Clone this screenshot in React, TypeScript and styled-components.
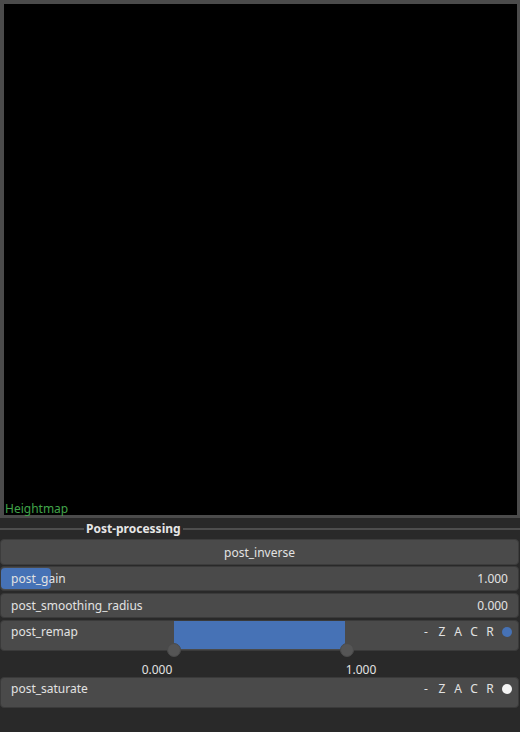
import styled, { createGlobalStyle } from "styled-components";

const GlobalStyle = createGlobalStyle`
    html, body {
        margin: 0;
        padding: 0;
        background: #292929;
    }
    body {
        width: 520px;
        height: 732px;
        overflow: hidden;
        font-family: "Noto Sans", "Open Sans", sans-serif;
        font-size: 12px;
        color: #e2e2e2;
    }
`;

interface RowProps {
    label: string;
    value?: string;
    fill?: number;
}

function SliderRow({ label, value, fill }: RowProps) {
    return (
        <Row>
            {fill !== undefined && <GainFill style={{ width: `${fill}px` }} />}
            <RowLabel>{label}</RowLabel>
            <RowValue>{value}</RowValue>
        </Row>
    );
}

function Flags({ dot }: { dot: string }) {
    return (
        <FlagBox>
            <Flag>-</Flag>
            <Flag>Z</Flag>
            <Flag>A</Flag>
            <Flag>C</Flag>
            <Flag>R</Flag>
            <Dot $color={dot} />
        </FlagBox>
    );
}

export default function App() {
    return (
        <>
            <GlobalStyle />
            <Page>
                <Viewer>
                    <ViewerLabel>Heightmap</ViewerLabel>
                </Viewer>

                <SectionHeader>
                    <Line $w={84} />
                    <SectionTitle>Post-processing</SectionTitle>
                    <Line />
                </SectionHeader>

                <Controls>
                    <Button>post_inverse</Button>
                    <SliderRow label="post_gain" value="1.000" fill={50} />
                    <SliderRow label="post_smoothing_radius" value="0.000" />

                    <RangeBlock>
                        <TallRow>
                            <RowLabel>post_remap</RowLabel>
                            <RangeFill />
                            <Flags dot="#4672b6" />
                            <Handle $x={173} />
                            <Handle $x={346} />
                        </TallRow>
                        <RangeLabels>
                            <RangeValue $x={157}>0.000</RangeValue>
                            <RangeValue $x={361}>1.000</RangeValue>
                        </RangeLabels>
                    </RangeBlock>

                    <TallRow>
                        <RowLabel>post_saturate</RowLabel>
                        <Flags dot="#f4f4f4" />
                    </TallRow>
                </Controls>
            </Page>
        </>
    );
}

const Page = styled.div`
    display: flex;
    flex-direction: column;
`;

const Viewer = styled.div`
    position: relative;
    height: 511px;
    background: #000;
    border: 4px solid #4b4b4b;
    border-bottom-width: 3px;
    border-right-width: 3px;
`;

const ViewerLabel = styled.span`
    position: absolute;
    left: 1px;
    bottom: -2px;
    color: #41a44a;
    font-size: 12px;
    line-height: 16px;
`;

const SectionHeader = styled.div`
    display: flex;
    align-items: center;
    gap: 2px;
    height: 18px;
    padding-top: 2px;
`;

const Line = styled.div<{ $w?: number }>`
    height: 2px;
    background: #4e4e4e;
    ${({ $w }) => ($w ? `width: ${$w}px;` : "flex: 1;")}
`;

const SectionTitle = styled.span`
    font-weight: 700;
    font-size: 12px;
    color: #e6e6e6;
    line-height: 16px;
`;

const Controls = styled.div`
    display: flex;
    flex-direction: column;
    gap: 2px;
    padding: 1px 1px 0 0;
`;

const Button = styled.div`
    height: 24px;
    margin-bottom: -1px;
    display: flex;
    align-items: center;
    justify-content: center;
    background: #4a4a4a;
    border: 1px solid #3c3c3c;
    border-radius: 4px;
`;

const Row = styled.div`
    position: relative;
    height: 23px;
    display: flex;
    align-items: center;
    justify-content: space-between;
    padding: 0 10px;
    background: #4a4a4a;
    border: 1px solid #3a3a3a;
    border-radius: 4px;
    overflow: hidden;
`;

const TallRow = styled(Row)`
    height: 26px;
    padding-top: 3px;
    align-items: flex-start;
    overflow: visible;
`;

const GainFill = styled.div`
    position: absolute;
    left: 0;
    top: 1px;
    bottom: 1px;
    background: #4672b6;
    border-radius: 4px;
`;

const RowLabel = styled.span`
    position: relative;
    line-height: 16px;
`;

const RowValue = styled.span`
    position: relative;
    line-height: 16px;
`;

const RangeBlock = styled.div`
    display: flex;
    flex-direction: column;
`;

const RangeFill = styled.div`
    position: absolute;
    left: 173px;
    width: 171px;
    top: 0;
    bottom: 1px;
    background: #4672b6;
`;

const Handle = styled.div<{ $x: number }>`
    position: absolute;
    left: ${({ $x }) => $x - 7}px;
    bottom: -7px;
    width: 12px;
    height: 12px;
    border-radius: 50%;
    background: #555;
    border: 1px solid #4a4a4a;
`;

const RangeLabels = styled.div`
    position: relative;
    height: 24px;
`;

const RangeValue = styled.span<{ $x: number }>`
    position: absolute;
    left: ${({ $x }) => $x}px;
    top: 11px;
    transform: translateX(-50%);
    line-height: 16px;
`;

const FlagBox = styled.div`
    display: flex;
    align-items: center;
    gap: 0;
`;

const Flag = styled.span`
    width: 16px;
    text-align: center;
    line-height: 16px;
`;

const Dot = styled.span<{ $color: string }>`
    width: 10px;
    height: 10px;
    margin-left: 4px;
    margin-right: -4px;
    border-radius: 50%;
    background: ${({ $color }) => $color};
`;
